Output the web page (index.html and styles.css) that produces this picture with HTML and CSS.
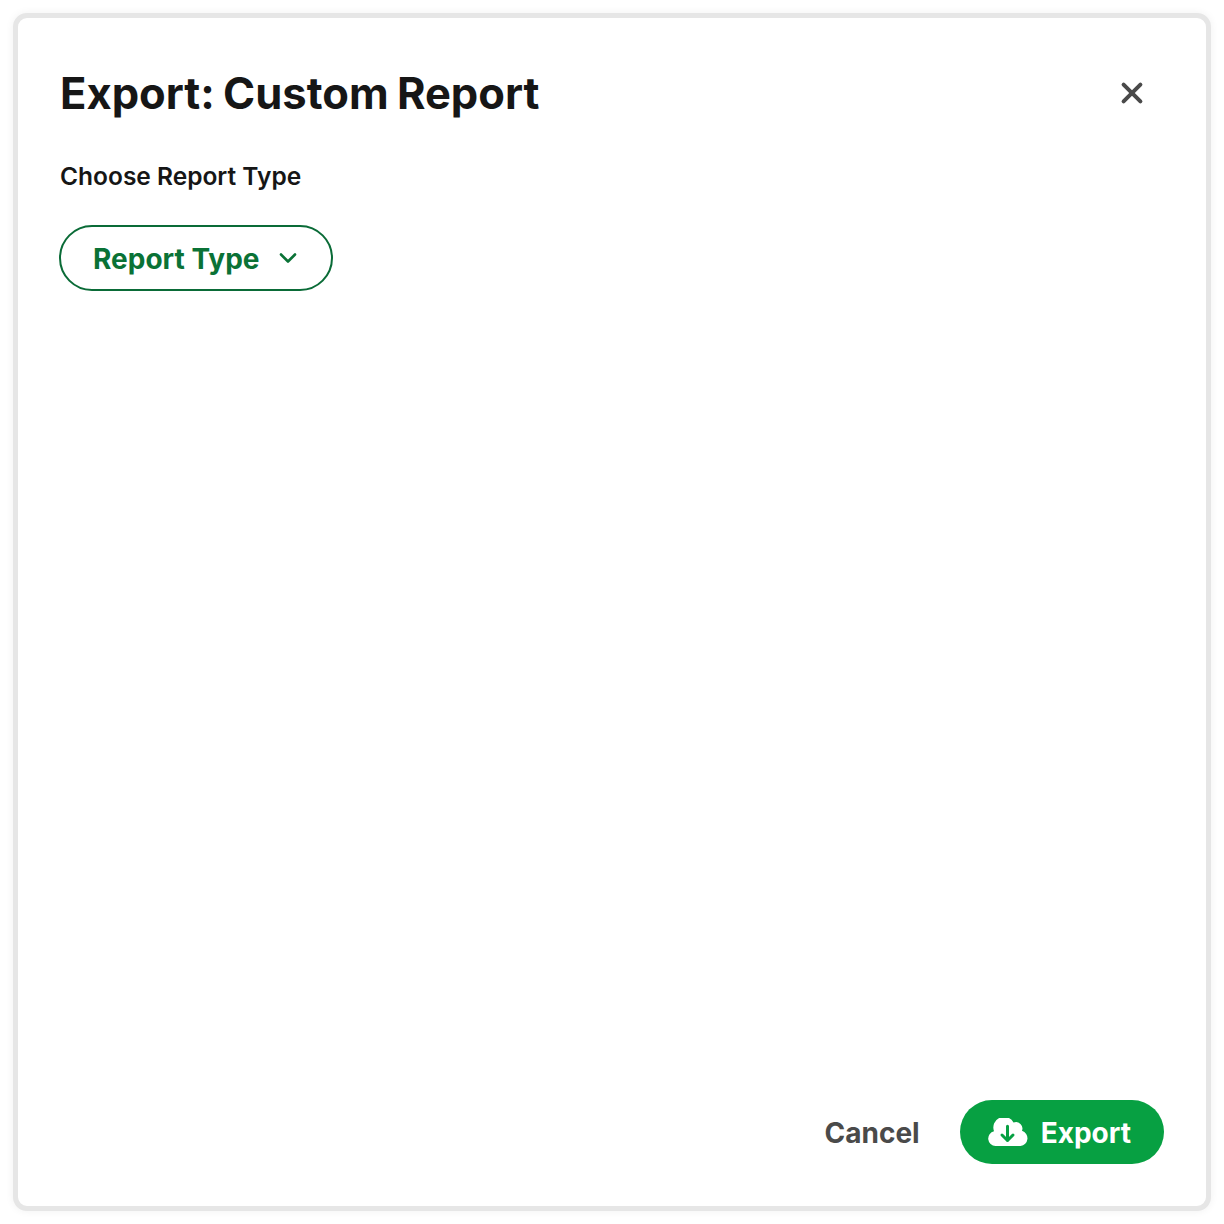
FILE: index.html
```html
<!DOCTYPE html>
<html lang="en">
<head>
    <meta charset="UTF-8">
    <title>Export: Custom Report</title>
    <link rel="stylesheet" href="styles.css">
</head>
<body>

<div class="modal">
    <div class="modal-header">
        <h1>Export: Custom Report</h1>
        <button class="close" aria-label="Close">
            <svg width="24" height="24" viewBox="0 0 24 24"><path d="M3.6 3.6 L20.4 20.4 M20.4 3.6 L3.6 20.4" fill="none" stroke="#4a4a4a" stroke-width="4" stroke-linecap="round"/></svg>
        </button>
    </div>
    <div class="modal-body">
        <h2>Choose Report Type</h2>
        <button class="select-btn">
            <span class="label">Report Type</span>
            <svg width="18" height="12" viewBox="0 0 18 12"><path d="M2 2.5 L9 9.5 L16 2.5" fill="none" stroke="#0a7236" stroke-width="2.6" stroke-linecap="round" stroke-linejoin="round"/></svg>
        </button>
    </div>
    <div class="modal-footer">
        <button class="cancel">Cancel</button>
        <button class="export">
            <svg width="40" height="28" viewBox="0 0 40 28"><path fill="#fff" d="M7.5 28 A7.5 7.5 0 0 1 6 13.2 A10.7 10.7 0 0 1 25.5 4.5 A6.5 6.5 0 0 1 34 12.8 A7.8 7.8 0 0 1 32.5 28 Z"/><path d="M19.5 8.2 L19.5 22.5 M14 17 L19.5 22.5 L25 17" fill="none" stroke="#07a042" stroke-width="3" stroke-linecap="round" stroke-linejoin="round"/></svg>
            <span class="label">Export</span>
        </button>
    </div>
</div>

</body>
</html>
```

FILE: styles.css
```css
body {
    margin: 0;
    padding: 13px;
    background-color: #fff;
    font-family: Inter, "Liberation Sans", sans-serif;
}
button {
    font-family: inherit;
    cursor: pointer;
}
.modal {
    box-sizing: border-box;
    height: 1198px;
    display: flex;
    flex-direction: column;
    padding: 49px 42px 42px 42px;
    background-color: #fff;
    border: 5px solid #e6e6e6;
    border-radius: 14px;
    box-shadow: 0 0 8px rgba(0,0,0,0.06);
}
.modal-header {
    display: flex;
    justify-content: space-between;
    align-items: center;
    padding-right: 20px;
}
h1 {
    margin: 0;
    font-size: 43.5px;
    line-height: 52px;
    font-weight: 700;
    word-spacing: -2px;
    color: #161616;
}
.close {
    display: flex;
    padding: 0;
    border: none;
    background: none;
}
.modal-body {
    flex: 1;
}
h2 {
    margin: 40px 0 0 0;
    font-size: 24.5px;
    line-height: 34px;
    font-weight: 600;
    color: #161616;
}
.label {
    padding-top: 2px;
}
.select-btn {
    display: flex;
    align-items: center;
    gap: 19px;
    height: 66px;
    margin: 32px 0 0 -1px;
    padding: 0 34px 0 32px;
    font-size: 28px;
    font-weight: 700;
    color: #0a7236;
    background: #fff;
    border: 2px solid #0a6b37;
    border-radius: 33px;
}
.modal-footer {
    display: flex;
    justify-content: flex-end;
    align-items: center;
    gap: 40px;
}
.cancel {
    padding: 2px 0 0 0;
    border: none;
    background: none;
    font-size: 28px;
    font-weight: 700;
    color: #4a4a4a;
}
.export {
    display: flex;
    align-items: center;
    gap: 13px;
    height: 64px;
    padding: 0 33px 0 28px;
    font-size: 28px;
    font-weight: 700;
    color: #fff;
    background-color: #07a042;
    border: none;
    border-radius: 32px;
}
```
